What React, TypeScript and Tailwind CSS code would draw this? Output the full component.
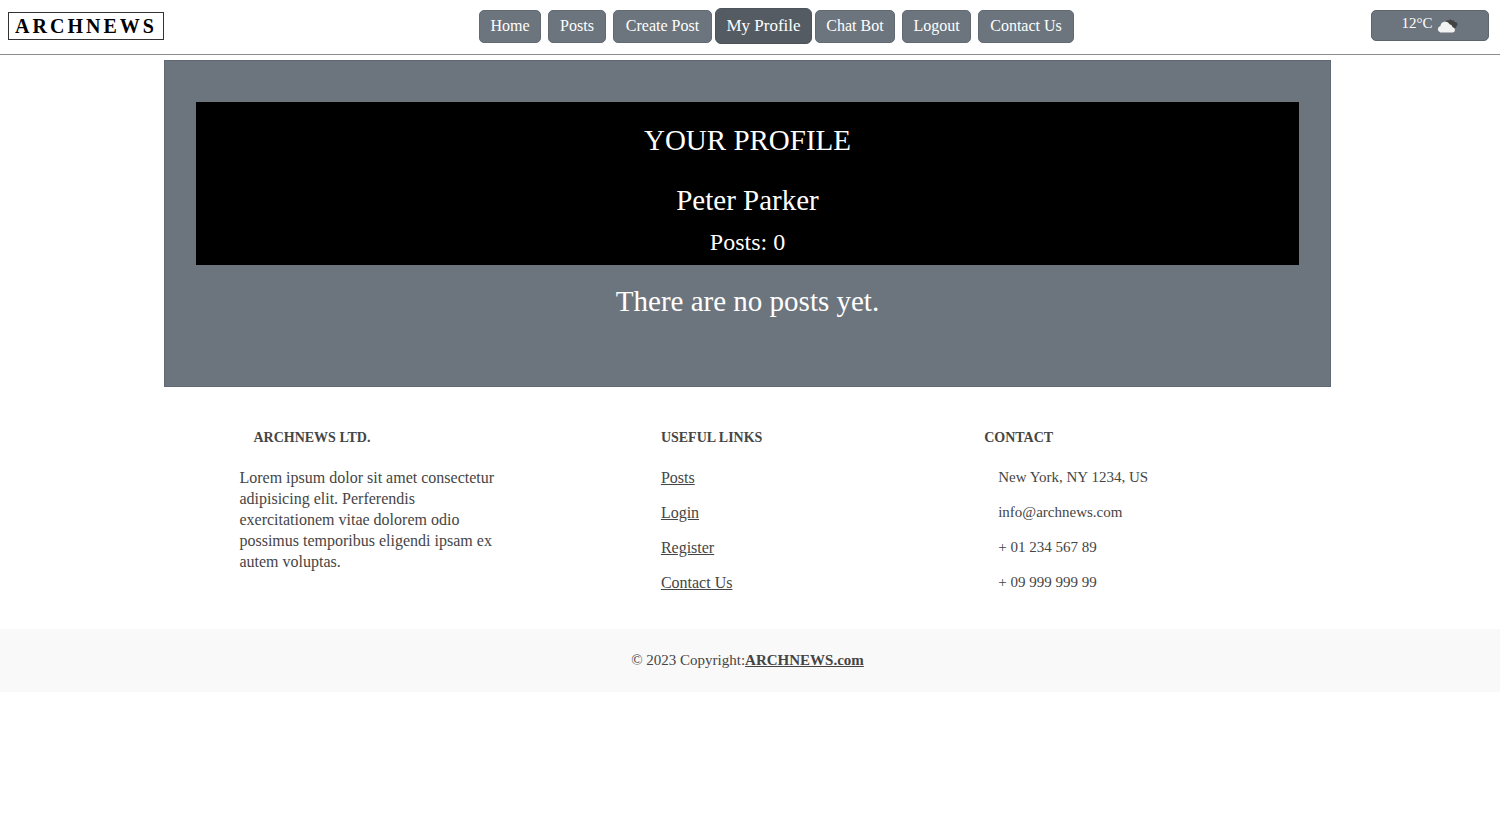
import React from "react";

type NavItem = { label: string; width: string };

const navItems: NavItem[] = [
  { label: "Home", width: "w-[62px]" },
  { label: "Posts", width: "w-[58px]" },
  { label: "Create Post", width: "w-[99px]" },
  { label: "My Profile", width: "w-[97px]" },
  { label: "Chat Bot", width: "w-[80px]" },
  { label: "Logout", width: "w-[69px]" },
  { label: "Contact Us", width: "w-[96px]" },
];

const usefulLinks = ["Posts", "Login", "Register", "Contact Us"];
const contactLines = ["New York, NY 1234, US", "info@archnews.com", "+ 01 234 567 89", "+ 09 999 999 99"];

function CloudIcon() {
  return (
    <svg width="22" height="14" viewBox="0 0 22 14" aria-hidden="true">
      <path
        d="M8.5 3.5 9.6 1.2 11.6 1.6 13 .2l2 1.2 1.6-.2 1.2 1.8 2 .4.9 2.2-1.2 1.4-.2 1.6-2.3 1.2L9 6z"
        fill="#424242"
      />
      <path
        d="M3.4 13.5A3.4 3.4 0 0 1 3.4 6.9 5 5 0 0 1 12.6 5.2 3.6 3.6 0 0 1 15.6 8.2 2.7 2.7 0 0 1 16 13.5z"
        fill="#f2f2f2"
      />
    </svg>
  );
}

function Header() {
  return (
    <header className="flex h-[55px] items-start justify-between border-b border-[#8c8c8c] pr-[11px] pl-2">
      <a
        href="#home"
        className="mt-3 mr-[18px] flex h-7 w-[156px] items-center justify-center border border-[#333] text-[20px] leading-none font-bold tracking-[3px] text-black"
      >
        ARCHNEWS
      </a>
      <nav className="mt-2 flex h-9 items-center gap-[7px]">
        {navItems.map(({ label, width }) =>
          label === "My Profile" ? (
            <button
              key={label}
              type="button"
              aria-current="page"
              className={`-mx-1 h-9 rounded-md border border-[#4b545c] bg-[#545b62] text-[17px] whitespace-nowrap text-white ${width}`}
            >
              {label}
            </button>
          ) : (
            <button
              key={label}
              type="button"
              className={`h-[33px] rounded-[5px] border border-[#626b74] bg-[#6c757d] text-[16px] whitespace-nowrap text-white ${width}`}
            >
              {label}
            </button>
          ),
        )}
      </nav>
      <button
        type="button"
        className="mt-[10px] flex h-[31px] w-[118px] items-center justify-center gap-1 rounded-[5px] border border-[#5c666e] bg-[#6c757d] text-[15px] text-white"
      >
        <span className="pb-1">12°C</span>
        <CloudIcon />
      </button>
    </header>
  );
}

function Profile() {
  return (
    <main className="mx-auto mt-[5px] w-[78%] border border-[#606a72] bg-[#6c757d] px-[31px] pt-[41px] pb-[67px] text-center text-white">
      <section className="bg-black pt-5 pb-[5px]">
        <h1 className="text-[29px] leading-9">YOUR PROFILE</h1>
        <h2 className="mt-6 text-[29px] leading-9">Peter Parker</h2>
        <p className="mt-[6px] text-[24px] leading-9">Posts: 0</p>
      </section>
      <p className="mt-[18px] text-[29px] leading-9">There are no posts yet.</p>
    </main>
  );
}

function Footer() {
  return (
    <div className="mx-auto mt-10 grid w-[78%] grid-cols-[421fr_323fr_346fr] pl-[75px] text-[16px] leading-[21px] text-[#454545]">
      <section>
        <h3 className="pl-[14px] text-[14px] font-bold">ARCHNEWS LTD.</h3>
        <p className="mt-[19px] w-[270px]">
          Lorem ipsum dolor sit amet consectetur adipisicing elit. Perferendis exercitationem vitae
          dolorem odio possimus temporibus eligendi ipsam ex autem voluptas.
        </p>
      </section>
      <section>
        <h3 className="text-[14px] font-bold">USEFUL LINKS</h3>
        <ul className="mt-[19px] space-y-[14px]">
          {usefulLinks.map((label) => (
            <li key={label}>
              <a href="#" className="underline">
                {label}
              </a>
            </li>
          ))}
        </ul>
      </section>
      <section>
        <h3 className="text-[14px] font-bold">CONTACT</h3>
        <ul className="mt-[19px] space-y-[14px] pl-[14px] text-[15px]">
          {contactLines.map((line) => (
            <li key={line} className="leading-[21px]">
              {line}
            </li>
          ))}
        </ul>
      </section>
    </div>
  );
}

export default function App() {
  return (
    <div className="min-h-screen bg-white font-['Liberation_Serif',serif]">
      <Header />
      <div className="pr-[5px]">
        <Profile />
        <Footer />
      </div>
      <footer className="mt-9 bg-[#f9f9f9] py-[21px] pr-[5px] text-center text-[15px] leading-[21px] text-[#454545]">
        © 2023 Copyright:
        <a href="#" className="font-bold underline">
          ARCHNEWS.com
        </a>
      </footer>
    </div>
  );
}
